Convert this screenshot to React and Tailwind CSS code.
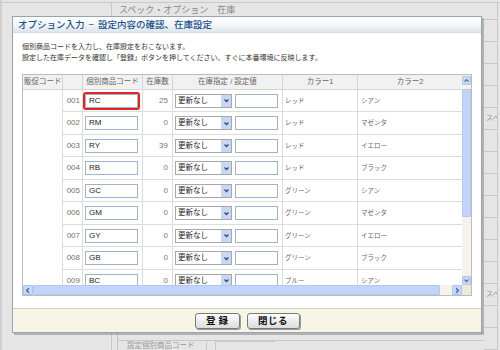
import React from 'react';

const rows = [
  { no: '001', code: 'RC', stock: '25', c1: 'レッド', c2: 'シアン', h: 'h-[22px]' },
  { no: '002', code: 'RM', stock: '0', c1: 'レッド', c2: 'マゼンタ', h: 'h-[23px]' },
  { no: '003', code: 'RY', stock: '39', c1: 'レッド', c2: 'イエロー', h: 'h-[22px]' },
  { no: '004', code: 'RB', stock: '0', c1: 'レッド', c2: 'ブラック', h: 'h-[23px]' },
  { no: '005', code: 'GC', stock: '0', c1: 'グリーン', c2: 'シアン', h: 'h-[22px]' },
  { no: '006', code: 'GM', stock: '0', c1: 'グリーン', c2: 'マゼンタ', h: 'h-[23px]' },
  { no: '007', code: 'GY', stock: '0', c1: 'グリーン', c2: 'イエロー', h: 'h-[22px]' },
  { no: '008', code: 'GB', stock: '0', c1: 'グリーン', c2: 'ブラック', h: 'h-[23px]' },
  { no: '009', code: 'BC', stock: '0', c1: 'ブルー', c2: 'シアン', h: 'h-[22px]' },
];

const Chevron = ({ dir }) => {
  const d = {
    up: 'M2 6 L4.5 3.5 L7 6',
    down: 'M2 3.5 L4.5 6 L7 3.5',
    left: 'M5.5 2 L3 4.5 L5.5 7',
    right: 'M3.5 2 L6 4.5 L3.5 7',
  }[dir];
  return (
    <svg width="9" height="9" viewBox="0 0 9 9">
      <path d={d} fill="none" stroke="#4d6185" strokeWidth="1.4" />
    </svg>
  );
};

const ArrowBtn = ({ dir, className }) => (
  <div className={`flex items-center justify-center shrink-0 bg-[#c6d7f8] border border-[#b0c4f0] rounded-[1px] ${className}`}>
    <Chevron dir={dir} />
  </div>
);

const TextBox = ({ value, w }) => (
  <div className={`${w} h-[14px] bg-white border border-[#9fb4c6] flex items-center pl-[3px] text-[8px] text-[#222]`}>
    {value}
  </div>
);

const SelectBox = () => (
  <div className="w-[57px] h-[14px] bg-white border border-[#a7a7a7] flex items-center">
    <span className="flex-1 pl-[2px] text-[7.5px] text-[#222] leading-none">更新なし</span>
    <div className="w-[10px] h-full bg-[#c9d8f1] flex items-center justify-center">
      <svg width="7" height="7" viewBox="0 0 7 7">
        <path d="M1.5 2.5 L3.5 4.5 L5.5 2.5" fill="none" stroke="#2f4f8f" strokeWidth="1.3" />
      </svg>
    </div>
  </div>
);

const Row = ({ r, first }) => (
  <div className={`flex shrink-0 ${r.h} border-b border-[#dcdcdc]`}>
    <div className="w-[20px] shrink-0 border-r border-[#dcdcdc] flex items-center justify-end pr-[2px] text-[8px] text-[#7b7166]">
      {r.no}
    </div>
    <div className="w-[60px] shrink-0 border-r border-[#dcdcdc] flex items-center">
      {first ? (
        <div className="border-2 border-[#e02424] rounded-[3px]">
          <TextBox value={r.code} w="w-[53px]" />
        </div>
      ) : (
        <div className="pl-[2px]">
          <TextBox value={r.code} w="w-[53px]" />
        </div>
      )}
    </div>
    <div className="w-[30px] shrink-0 border-r border-[#dcdcdc] flex items-center justify-end pr-[4px] text-[8px] text-[#777]">
      {r.stock}
    </div>
    <div className="w-[110px] shrink-0 border-r border-[#dcdcdc] flex items-center pl-[2px] gap-[3px]">
      <SelectBox />
      <div className="w-[43px] h-[14px] bg-white border border-[#9fb4c6]" />
    </div>
    <div className="w-[75px] shrink-0 border-r border-[#dcdcdc] flex items-center pl-[2px] text-[6.5px] text-[#666]">
      {r.c1}
    </div>
    <div className="flex-1 flex items-center pl-[3px] text-[6.5px] text-[#666]">{r.c2}</div>
  </div>
);

const Dialog = () => (
  <div className="absolute left-[12px] top-[16px] w-[470px] h-[317px] bg-white border border-[#98a4ae] shadow-[2px_2px_0_rgba(0,0,0,0.22)] flex flex-col">
    <div className="h-[16px] shrink-0 bg-gradient-to-b from-white via-[#f3f6f8] to-[#dde6ec] border-b border-[#d3dde4] flex items-center pl-[5px]">
      <span className="text-[9.5px] leading-none text-[#23508c] font-medium">
        オプション入力<span className="px-[4px]">−</span>設定内容の確認、在庫設定
      </span>
    </div>
    <div className="px-[9px] pt-[8px] text-[7px] leading-[11px] text-[#333]">
      <p>個別商品コードを入力し、在庫設定をおこないます。</p>
      <p>設定した在庫データを確認し「登録」ボタンを押してください。すぐに本番環境に反映します。</p>
    </div>
    <div className="mx-[9px] mt-[11px] h-[222px] shrink-0 border border-[#bcbcbc] flex flex-col">
      <div className="flex h-[210px] shrink-0">
        <div className="flex-1 flex flex-col overflow-hidden">
          <div className="flex h-[15px] shrink-0 bg-[#f1f1f1] border-b border-[#d6d6d6] text-[7.5px] text-[#666] leading-none">
            <div className="w-[40px] shrink-0 border-r border-[#d6d6d6] flex items-center pl-[1px]">販促コード</div>
            <div className="w-[20px] shrink-0 border-r border-[#d6d6d6]" />
            <div className="w-[60px] shrink-0 border-r border-[#d6d6d6] flex items-center justify-center">個別商品コード</div>
            <div className="w-[30px] shrink-0 border-r border-[#d6d6d6] flex items-center justify-center">在庫数</div>
            <div className="w-[110px] shrink-0 border-r border-[#d6d6d6] flex items-center justify-center">在庫指定 / 設定値</div>
            <div className="w-[75px] shrink-0 border-r border-[#d6d6d6] flex items-center justify-center">カラー1</div>
            <div className="flex-1 flex items-center justify-center">カラー2</div>
          </div>
          <div className="flex flex-1 min-h-0 overflow-hidden">
            <div className="w-[40px] shrink-0 border-r border-[#dcdcdc]" />
            <div className="flex-1 flex flex-col">
              {rows.map((r, i) => (
                <Row key={r.no} r={r} first={i === 0} />
              ))}
            </div>
          </div>
        </div>
        <div className="w-[9px] shrink-0 bg-[#f4f2eb] flex flex-col">
          <ArrowBtn dir="up" className="h-[9px] mt-[1px]" />
          <div className="mt-[4px] h-[128px] shrink-0 bg-[#c3d4fa] border border-[#b3c7f4] rounded-[1px]" />
          <div className="flex-1" />
          <ArrowBtn dir="down" className="h-[9px]" />
        </div>
      </div>
      <div className="flex h-[10px] shrink-0">
        <ArrowBtn dir="left" className="w-[10px]" />
        <div className="w-[407px] bg-[#c3d4fa] border border-[#b3c7f4] rounded-[1px]" />
        <div className="flex-1 bg-[#f4f2eb]" />
        <ArrowBtn dir="right" className="w-[10px]" />
        <div className="w-[9px] bg-[#ede9dc]" />
      </div>
    </div>
    <div className="flex-1" />
    <div className="h-[24px] shrink-0 bg-[#f6f5e6] border-t border-[#cfcfc2] flex items-center justify-center gap-[7px]">
      <button className="w-[45px] h-[16px] rounded-[3px] border border-[#7a7a7a] bg-gradient-to-b from-white to-[#dcdcdc] text-[9.5px] font-bold text-[#111] leading-none tracking-[3px] pl-[3px] shadow-[1px_1px_0_#9a9a9a]">
        登録
      </button>
      <button className="w-[53px] h-[16px] rounded-[3px] border border-[#7a7a7a] bg-gradient-to-b from-white to-[#dcdcdc] text-[9.5px] font-bold text-[#111] leading-none tracking-[0.5px] shadow-[1px_1px_0_#9a9a9a]">
        閉じる
      </button>
    </div>
  </div>
);

export default function App() {
  const rightCells = Array.from({ length: 15 });
  return (
    <div className="relative w-[500px] h-[350px] overflow-hidden bg-[#e5e5e5] font-['Liberation_Sans','Noto_Sans_CJK_JP',sans-serif]">
      <div className="h-full flex flex-col border-l-2 border-[#cfcfcf]">
        <div className="h-[5px] border-b border-[#c9c9c9]" />
        <div className="flex flex-1">
          <div className="w-[110px] border-r border-[#c9c9c9]" />
          <div className="flex-1 flex flex-col">
            <div className="pl-[7px] pt-[1px] text-[9px] text-[#8a8a8a] leading-[12px]">スペック・オプション　在庫</div>
            <div className="flex-1" />
            <div className="h-[18px] border-t border-[#c9c9c9] flex">
              <div className="w-[6px] border-r border-[#c9c9c9]" />
              <div className="flex-1 flex flex-col">
                <div className="h-[8px] border-b border-[#c9c9c9]" />
                <div className="flex flex-1">
                  <div className="w-[89px] border-r border-[#c9c9c9] pl-[9px] pt-[1px] text-[7.5px] text-[#999] leading-none">設定個別商品コード</div>
                  <div className="w-[8px]" />
                  <div className="w-[60px] border-l border-t border-[#c9c9c9]" />
                </div>
              </div>
            </div>
          </div>
          <div className="w-[14px] flex flex-col border-r border-[#c9c9c9] mr-[2px]">
            <div className="h-[17px] border-b border-[#c9c9c9]" />
            {rightCells.map((_, i) => (
              <div key={i} className="h-[22px] border-b border-[#c9c9c9] overflow-hidden whitespace-nowrap flex items-center pl-[2px] text-[7px] text-[#999]">
                {i === 4 || i === 12 ? 'スペッ' : ''}
              </div>
            ))}
          </div>
        </div>
      </div>
      <Dialog />
    </div>
  );
}
